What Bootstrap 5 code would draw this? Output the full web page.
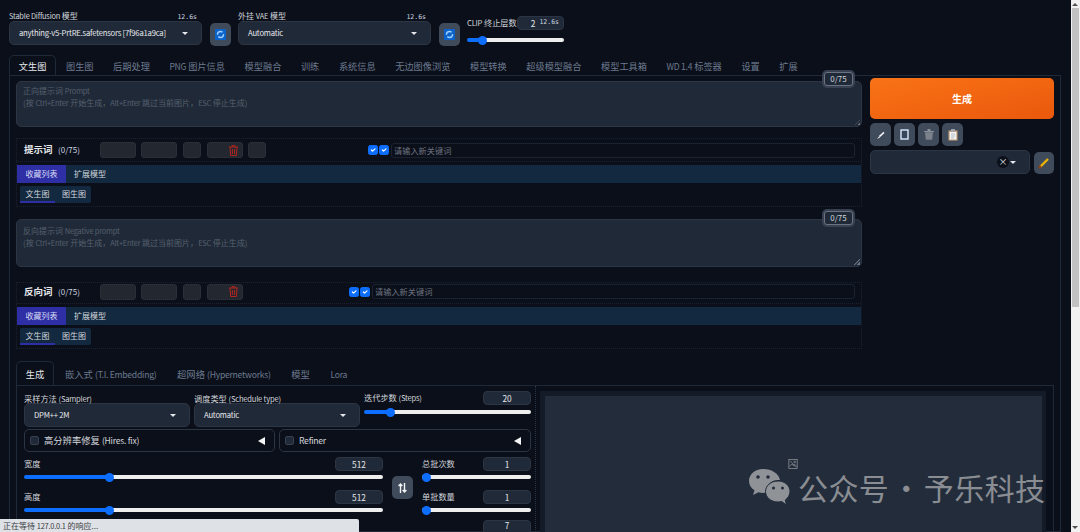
<!DOCTYPE html>
<html lang="zh">
<head>
  <meta charset="UTF-8">
  <title>Stable Diffusion WebUI</title>
  <link href="https://cdn.jsdelivr.net/npm/bootstrap@5.3.0/dist/css/bootstrap.min.css" rel="stylesheet">
  <style>
    html, body { height: 532px; overflow: hidden; }
    body { background: #0b0f19; color: #d1d5db; font: 9.5px/1.2 "Noto Sans CJK SC", "Noto Sans", sans-serif; }
    .lat { font-size: .93em; letter-spacing: -.03em; }
    .app { height: 532px; overflow: hidden; }
    .main-area { width: 1071px; height: 532px; padding-left: 9px; overflow: hidden; flex: none; }
    .fake-scroll { width: 9px; background: #f1f1f1; flex: none; display: flex; flex-direction: column; align-items: flex-end; }
    .fake-scroll i { display: block; width: 7px; height: 299px; background: #c1c1c1; margin: 2px 1px 0 0; }
    .fake-scroll b { width: 0; height: 0; border: 3px solid transparent; border-bottom-color: #505050; border-top: 0; margin: 3px 2px 0 0; }
    .fake-scroll u { width: 0; height: 0; border: 3px solid transparent; border-top-color: #505050; border-bottom: 0; margin: auto 2px 3px 0; }

    .top-row { height: 55px; }
    .pick { width: 193px; padding-top: 10px; flex: none; }
    .pick-head { height: 11px; font-size: 8px; line-height: 11px; }
    .timer { font: 6.5px/11px "DejaVu Sans Mono", monospace; margin-top: 2px; padding-right: 5px; color: #cbd5e1; }
    .drop { height: 24px; background: #1f2937; border: 1px solid #2b3544; border-radius: 5px; padding: 0 13px 0 9px; font-size: 8.3px; color: #e5e7eb; white-space: nowrap; }
    .caret-mark { width: 0; height: 0; border: 3px solid transparent; border-top-color: #e5e7eb; border-bottom: 0; flex: none; }
    .refresh-btn { width: 21px; height: 23px; margin: 23px 7px 0 8px; flex: none; background: #3f4a5a; border-radius: 5px; }
    .clip-box { width: 97px; padding-top: 16px; flex: none; }
    .clip-box .field-num { width: 47px; margin: 0; padding-right: 4px; gap: 4px; }

    .field-num { height: 14px; width: 48px; background: #1f2937; border: 1px solid #2b3544; border-radius: 4px; font-size: 8.3px; line-height: 12px; text-align: center; color: #e5e7eb; flex: none; }
    .num-last { line-height: 9px; }
    .slide { display: block; width: 100%; height: 12px; margin: 0; padding: 0; appearance: none; -webkit-appearance: none; background: transparent; }
    .slide::-webkit-slider-runnable-track { height: 4px; border-radius: 2px; background: linear-gradient(to right, #0d6efd var(--v), #eeeeee var(--v)); }
    .slide::-webkit-slider-thumb { -webkit-appearance: none; width: 9px; height: 9px; margin-top: -2.5px; border-radius: 50%; background: #0d6efd; border: 0; }

    .nav-tabs.sd-tabs { border-bottom: 1px solid #1f2937; --bs-nav-tabs-border-width: 0; }
    .sd-tabs .nav-link { padding: 0 8.8px; height: 20px; line-height: 21px; font-size: 9.2px; color: #6b7a90; background: none; border: 1px solid transparent; border-bottom: 0; margin: 0; border-radius: 5px 5px 0 0; white-space: nowrap; }
    .sd-tabs .nav-link.active { color: #e5e7eb; background: #0b0f19; border-color: #1f2937; }
    .sd-tabs.lower .nav-link { height: 24px; line-height: 25px; font-size: 9.3px; padding: 0 8.8px; margin-right: 1px; }

    .tab-body { width: 1052px; height: 456px; padding: 5px 6px 0; border: solid #1f2937; border-width: 0 1px 1px; }
    .left-col { width: 846px; flex: none; }
    .right-col { width: 184px; margin-left: 8px; flex: none; }

    .prompt-box { position: relative; height: 46px; background: #1f2937; border: 1px solid #2b3544; border-radius: 5px; padding: 3px 6px; color: #56606f; font-size: 8px; line-height: 11.5px; }
    .prompt-box.neg { height: 48px; margin-top: 12px; padding-top: 5px; }
    .prompt-box::after { content: ""; position: absolute; right: 1px; bottom: 1px; width: 6px; height: 6px; background: linear-gradient(135deg, transparent 50%, #6b7280 50%, transparent 65%, transparent 75%, #6b7280 75%); }
    .count-badge { position: absolute; top: -10px; right: 8px; width: 29px; height: 14px; background: #1f2937; border: 1px solid #6b7280; box-shadow: 0 0 0 2px #374151; border-radius: 3px; color: #d1d5db; font-size: 8px; line-height: 12px; text-align: center; }
    .neg .count-badge { top: -9px; }

    .tag-box { height: 69px; margin-top: 11px; border: 1px dotted #1a2230; }
    .tag-box.neg { height: 67px; margin-top: 15px; }
    .tag-head { height: 23px; padding: 3px 6px 3px 7px; border-bottom: 1px dotted #1a2230; }
    .tag-box.neg .tag-head { height: 21px; padding: 0 6px 3px 7px; }
    .tag-title { width: 34px; font-size: 9.5px; font-weight: 700; color: #e5e7eb; flex: none; }
    .tag-count { width: 42px; font-size: 8px; color: #cbd5e1; flex: none; }
    .gray-block { height: 16px; background: #23272f; border: 1px solid #2a2e37; border-radius: 3px; margin-right: 5px; flex: none; }
    .w36 { width: 36px; }
    .w18 { width: 18px; }
    .gap6 { margin-right: 6px; }
    .tag-check { width: 10px; height: 10px; margin: 0 1px 0 0; border-radius: 2px; flex: none; }
    .tag-input { height: 15px; flex-grow: 1; margin-left: 1px; border: 1px solid #1a2230; border-radius: 3px; padding: 0 2px; color: #6b7280; font-size: 8.2px; line-height: 13px; }
    .fav-bar { height: 18px; background: #13293f; margin-top: 3px; font-size: 8px; line-height: 18px; color: #d1d5db; }
    .fav-on { width: 49px; background: #2f2fa5; text-align: center; color: #d8dcf5; margin-right: 8px; flex: none; }
    .sub-tabs { width: 71px; height: 17px; margin: 3px 0 0 3px; background: #13293f; border-radius: 2px; font-size: 8px; line-height: 15px; color: #d1d5db; }
    .sub-tabs span { padding: 0 5px 0 7px; flex: none; }
    .sub-tabs .on { width: 35px; border-bottom: 2px solid #2f2fa5; text-align: center; height: 17px; padding: 0; }

    .gen-btn { height: 41px; margin-top: -3px; border: 0; border-radius: 5px; width: 100%; background: linear-gradient(to bottom right, #f97316, #ea580c); color: #fff; font-size: 10px; font-weight: 700; }
    .tool-btn { width: 21px; height: 23px; padding: 0; background: #3f4a5a; border: 0; border-radius: 5px; flex: none; }
    .pencil-btn { width: 20px; height: 22px; margin-top: 2px; }
    .style-pick { width: 160px; height: 24px; background: #1f2937; border: 1px solid #2b3544; border-radius: 5px; padding-right: 13px; flex: none; }
    .clear-x { width: 12px; height: 12px; border-radius: 50%; background: #0b0f19; color: #e5e7eb; font-size: 9px; line-height: 12px; text-align: center; margin-right: 1px; }

    .lower-wrap { margin-top: 12px; width: 1038px; }
    .lower-body { height: 160px; padding-left: 7px; border-left: 1px solid #1f2937; border-right: 1px solid #1f2937; }
    .gen-left { width: 507px; padding-top: 5px; flex: none; }
    .gen-right { position: relative; width: 506px; margin-left: 4px; padding: 5px 4px 0 5px; background: #131b28; margin-top: 5px; flex: none; }
    .gen-divider { width: 1px; margin-left: 4px; border-left: 1px dotted #2b3544; flex: none; }
    .gen-preview { height: 150px; background: #222c3b; }

    .sel-col { width: 166px; padding-top: 2px; flex: none; }
    .sel-col label { display: block; height: 10px; font-size: 8.2px; line-height: 10px; margin-bottom: 0; }
    .slider-head { height: 14px; font-size: 8.2px; }
    .fold-box { height: 23px; margin-top: 2px; border: 1px solid #2b3544; border-radius: 5px; padding: 0 9px 0 5px; font-size: 9.3px; color: #d1d5db; }
    .fold-box .form-check-input { width: 9px; height: 9px; margin: 0 5px 0 0; background-color: #1f2937; border-color: #374151; border-radius: 2px; }
    .fold-arrow { width: 0; height: 0; border: 4px solid transparent; border-right: 7px solid #f3f4f6; border-left: 0; margin-left: auto; }
    .dim-col { width: 359px; padding-top: 5px; flex: none; }
    .swap-col { width: 39px; padding-top: 24px; flex: none; }
    .batch-col { width: 109px; padding-top: 5px; flex: none; }
    .stack-gap { margin-top: 7px; }
    .swap-btn { display: block; margin: 0 auto; width: 21px; height: 23px; padding: 0; border: 0; background: #3f4a5a; border-radius: 5px; }

    .img-broken { position: absolute; left: 248px; top: 68px; }
    .mark-row { position: absolute; left: 208px; top: 76px; gap: 7px; }
    .mark-text { font: 30px/40px "Noto Sans CJK SC", sans-serif; color: #8a8d92; letter-spacing: .4px; word-spacing: -5px; white-space: nowrap; }
    .status-strip { position: absolute; left: 0; bottom: 0; width: 359px; height: 13px; background: #dee1e6; border-radius: 0 2px 0 0; color: #3c4043; font-size: 8px; line-height: 13px; padding-left: 3px; }
  </style>
</head>
<body>
<div class="app d-flex">
  <div class="main-area">

    <!-- top model pickers -->
    <div class="top-row d-flex">
      <div class="pick">
        <div class="pick-head d-flex justify-content-between"><span><span class="lat">Stable Diffusion</span> 模型</span><span class="timer">12.6s</span></div>
        <div class="drop d-flex align-items-center justify-content-between"><span class="lat">anything-v5-PrtRE.safetensors [7f96a1a9ca]</span><span class="caret-mark"></span></div>
      </div>
      <div class="refresh-btn d-flex align-items-center justify-content-center">
        <svg width="11" height="11" viewBox="0 0 11 11"><rect width="11" height="11" fill="#0b63c9"/><circle cx="5.5" cy="5.5" r="3" fill="none" stroke="#9fd0ff" stroke-width="1.4" stroke-dasharray="7 2"/></svg>
      </div>
      <div class="pick">
        <div class="pick-head d-flex justify-content-between"><span>外挂 <span class="lat">VAE</span> 模型</span><span class="timer">12.6s</span></div>
        <div class="drop d-flex align-items-center justify-content-between"><span class="lat">Automatic</span><span class="caret-mark"></span></div>
      </div>
      <div class="refresh-btn d-flex align-items-center justify-content-center">
        <svg width="11" height="11" viewBox="0 0 11 11"><rect width="11" height="11" fill="#0b63c9"/><circle cx="5.5" cy="5.5" r="3" fill="none" stroke="#9fd0ff" stroke-width="1.4" stroke-dasharray="7 2"/></svg>
      </div>
      <div class="clip-box">
        <div class="slider-head d-flex justify-content-between align-items-center"><span class="text-nowrap"><span class="lat">CLIP</span> 终止层数</span>
          <span class="field-num d-flex justify-content-end"><span>2</span><span class="timer m-0 p-0">12.6s</span></span></div>
        <input class="slide mt-1" type="range" style="--v:12%" value="12" aria-label="clip">
      </div>
    </div>

    <!-- main tabs -->
    <ul class="nav nav-tabs sd-tabs flex-nowrap" style="width:1052px">
      <li class="nav-item"><a class="nav-link active" href="#">文生图</a></li>
      <li class="nav-item"><a class="nav-link" href="#">图生图</a></li>
      <li class="nav-item"><a class="nav-link" href="#">后期处理</a></li>
      <li class="nav-item"><a class="nav-link" href="#"><span class="lat">PNG</span> 图片信息</a></li>
      <li class="nav-item"><a class="nav-link" href="#">模型融合</a></li>
      <li class="nav-item"><a class="nav-link" href="#">训练</a></li>
      <li class="nav-item"><a class="nav-link" href="#">系统信息</a></li>
      <li class="nav-item"><a class="nav-link" href="#">无边图像浏览</a></li>
      <li class="nav-item"><a class="nav-link" href="#">模型转换</a></li>
      <li class="nav-item"><a class="nav-link" href="#">超级模型融合</a></li>
      <li class="nav-item"><a class="nav-link" href="#">模型工具箱</a></li>
      <li class="nav-item"><a class="nav-link" href="#"><span class="lat">WD 1.4</span> 标签器</a></li>
      <li class="nav-item"><a class="nav-link" href="#">设置</a></li>
      <li class="nav-item"><a class="nav-link" href="#">扩展</a></li>
    </ul>

    <div class="tab-body">
      <div class="d-flex">
        <div class="left-col">
          <div class="prompt-box">
            正向提示词 <span class="lat">Prompt</span><br>(按 <span class="lat">Ctrl+Enter</span> 开始生成，<span class="lat">Alt+Enter</span> 跳过当前图片，<span class="lat">ESC</span> 停止生成)
            <span class="count-badge">0/75</span>
          </div>

          <div class="tag-box">
            <div class="tag-head d-flex align-items-center">
              <span class="tag-title">提示词</span><span class="tag-count">(0/75)</span>
              <span class="gray-block w36"></span><span class="gray-block w36 gap6"></span><span class="gray-block w18 gap6"></span>
              <span class="gray-block w36 d-flex align-items-center justify-content-end pe-1">
                <svg width="9" height="11" viewBox="0 0 9 11" fill="none" stroke="#b3261e" stroke-width="1"><path d="M0 2h9M3 2V.7h3V2M1 2l.6 8.5h5.8L8 2M3.4 4v5M5.6 4v5"/></svg>
              </span>
              <span class="gray-block w18"></span>
              <span class="d-flex align-items-center flex-grow-1" style="margin-left:97px">
                <input class="form-check-input tag-check" type="checkbox" checked aria-label="a"><input class="form-check-input tag-check" type="checkbox" checked aria-label="b">
                <span class="tag-input">请输入新关键词</span>
              </span>
            </div>
            <div class="fav-bar d-flex"><span class="fav-on">收藏列表</span><span>扩展模型</span></div>
            <div class="sub-tabs d-flex"><span class="on">文生图</span><span>图生图</span></div>
          </div>

          <div class="prompt-box neg">
            反向提示词 <span class="lat">Negative prompt</span><br>(按 <span class="lat">Ctrl+Enter</span> 开始生成，<span class="lat">Alt+Enter</span> 跳过当前图片，<span class="lat">ESC</span> 停止生成)
            <span class="count-badge">0/75</span>
          </div>

          <div class="tag-box neg">
            <div class="tag-head d-flex align-items-center">
              <span class="tag-title">反向词</span><span class="tag-count">(0/75)</span>
              <span class="gray-block w36"></span><span class="gray-block w36 gap6"></span><span class="gray-block w18 gap6"></span>
              <span class="gray-block w36 d-flex align-items-center justify-content-end pe-1">
                <svg width="9" height="11" viewBox="0 0 9 11" fill="none" stroke="#b3261e" stroke-width="1"><path d="M0 2h9M3 2V.7h3V2M1 2l.6 8.5h5.8L8 2M3.4 4v5M5.6 4v5"/></svg>
              </span>
              <span class="d-flex align-items-center flex-grow-1" style="margin-left:101px">
                <input class="form-check-input tag-check" type="checkbox" checked aria-label="c"><input class="form-check-input tag-check" type="checkbox" checked aria-label="d">
                <span class="tag-input">请输入新关键词</span>
              </span>
            </div>
            <div class="fav-bar d-flex"><span class="fav-on">收藏列表</span><span>扩展模型</span></div>
            <div class="sub-tabs d-flex"><span class="on">文生图</span><span>图生图</span></div>
          </div>
        </div>

        <div class="right-col">
          <button class="gen-btn" type="button">生成</button>
          <div class="d-flex mt-1" style="gap:3px">
            <button class="tool-btn" type="button" aria-label="read"><svg width="9" height="9" viewBox="0 0 9 9"><path d="M1 8 L3 5.6 L4 6.6 Z" fill="#f3f4f6"/><path d="M3.4 5.6 L8 1.4" stroke="#f3f4f6" stroke-width="1.5"/></svg></button>
            <button class="tool-btn" type="button" aria-label="copy"><svg width="9" height="11" viewBox="0 0 9 11"><rect x="1" y="1" width="7" height="9" fill="#39475a" stroke="#dbeafe" stroke-width="1.4"/></svg></button>
            <button class="tool-btn" type="button" aria-label="trash"><svg width="10" height="11" viewBox="0 0 10 11"><path d="M0 2h10v1H0zM3.5 0h3v2h-3z" fill="#8a9099"/><path d="M1 3.2h8l-.8 7.600H1.800z" fill="#7b828c"/></svg></button>
            <button class="tool-btn" type="button" aria-label="paste"><svg width="10" height="12" viewBox="0 0 10 12"><rect x=".5" y="1.500" width="9" height="10" fill="#c9a57c"/><rect x="1.700" y="3" width="6.600" height="7.500" fill="#f3f4f6"/><rect x="3" y="0" width="4" height="2.600" fill="#9ca3af"/><path d="M3 5h4M3 7h4M3 9h3" stroke="#9ca3af" stroke-width=".7"/></svg></button>
          </div>
          <div class="d-flex mt-1" style="gap:4px">
            <div class="style-pick d-flex align-items-center justify-content-end"><span class="clear-x">×</span><span class="caret-mark"></span></div>
            <button class="tool-btn pencil-btn" type="button" aria-label="edit"><svg width="12" height="12" viewBox="0 0 12 12"><path d="M2 10 L10 2" stroke="#eab308" stroke-width="2.400"/><path d="M1 11 L3 9.200" stroke="#92400e" stroke-width="2.400"/></svg></button>
          </div>
        </div>
      </div>

      <!-- lower settings -->
      <div class="lower-wrap">
        <ul class="nav nav-tabs sd-tabs lower flex-nowrap">
          <li class="nav-item"><a class="nav-link active" href="#">生成</a></li>
          <li class="nav-item"><a class="nav-link" href="#">嵌入式 <span class="lat">(T.I. Embedding)</span></a></li>
          <li class="nav-item"><a class="nav-link" href="#">超网络 <span class="lat">(Hypernetworks)</span></a></li>
          <li class="nav-item"><a class="nav-link" href="#">模型</a></li>
          <li class="nav-item"><a class="nav-link" href="#"><span class="lat">Lora</span></a></li>
        </ul>
        <div class="lower-body d-flex">
          <div class="gen-left">
            <div class="d-flex" style="gap:4px">
              <div class="sel-col"><label>采样方法 <span class="lat">(Sampler)</span></label><div class="drop d-flex align-items-center justify-content-between"><span class="lat">DPM++ 2M</span><span class="caret-mark"></span></div></div>
              <div class="sel-col"><label>调度类型 <span class="lat">(Schedule type)</span></label><div class="drop d-flex align-items-center justify-content-between"><span class="lat">Automatic</span><span class="caret-mark"></span></div></div>
              <div style="width:167px">
                <div class="slider-head d-flex justify-content-between align-items-center"><span>迭代步数 <span class="lat">(Steps)</span></span><span class="field-num">20</span></div>
                <input class="slide" type="range" style="--v:14%;margin-top:1px" value="14" aria-label="steps">
              </div>
            </div>
            <div class="d-flex" style="gap:4px">
              <div class="fold-box d-flex align-items-center" style="width:251px"><input class="form-check-input" type="checkbox" aria-label="hires"><span>高分辨率修复 <span class="lat">(Hires. fix)</span></span><span class="fold-arrow"></span></div>
              <div class="fold-box d-flex align-items-center" style="width:252px"><input class="form-check-input" type="checkbox" aria-label="refiner"><span class="lat">Refiner</span><span class="fold-arrow"></span></div>
            </div>
            <div class="d-flex">
              <div class="dim-col">
                <div class="slider-head d-flex justify-content-between align-items-center"><span>宽度</span><span class="field-num">512</span></div>
                <input class="slide" type="range" style="--v:23%" value="23" aria-label="width">
                <div class="slider-head d-flex justify-content-between align-items-center stack-gap"><span>高度</span><span class="field-num">512</span></div>
                <input class="slide" type="range" style="--v:23%" value="23" aria-label="height">
              </div>
              <div class="swap-col">
                <button class="swap-btn" type="button" aria-label="swap"><svg width="9" height="10" viewBox="0 0 9 10" fill="none" stroke="#f3f4f6" stroke-width="1.400"><path d="M2.500 10V1M.6 3 2.500 1l1.900 2M6.500 0v9M4.600 7l1.900 2 1.900-2"/></svg></button>
              </div>
              <div class="batch-col">
                <div class="slider-head d-flex justify-content-between align-items-center"><span>总批次数</span><span class="field-num">1</span></div>
                <input class="slide" type="range" style="--v:0%" value="0" aria-label="batch count">
                <div class="slider-head d-flex justify-content-between align-items-center stack-gap"><span>单批数量</span><span class="field-num">1</span></div>
                <input class="slide" type="range" style="--v:0%" value="0" aria-label="batch size">
                <div class="d-flex justify-content-end" style="margin-top:4px"><span class="field-num num-last">7</span></div>
              </div>
            </div>
          </div>
          <div class="gen-divider"></div>
          <div class="gen-right">
            <div class="gen-preview"></div>
            <svg class="img-broken" width="10" height="10" viewBox="0 0 11 12" fill="none" stroke="#8f9297" stroke-width=".9"><rect x=".5" y=".5" width="10" height="11"/><path d="M1 9l3-3 2 2 1.500-1.500L10 9M2 2l7 8"/><circle cx="7.500" cy="3.500" r="1"/></svg>
            <div class="mark-row d-flex align-items-center">
              <svg width="43" height="38" viewBox="0 0 43 38" fill="#8f9297"><path d="M15 1C7 1 1 6.500 1 13c0 3.800 2 7 5.500 9.300L5 27l5.500-2.700c1.500.4 3 .6 4.500.6 1 0 2-.1 3-.3C17 17 24 11 32 12 31 5.800 24 1 15 1z"/><path d="M30 13c-7.200 0-12.500 4.800-12.500 10.500S22.800 34 30 34c1.300 0 2.500-.2 3.700-.5L38.500 37l-1.200-5C40 30 42 27 42 23.500 42 17.800 37 13 30 13z" stroke="#222c3b" stroke-width="1"/><circle cx="10" cy="9" r="1.800" fill="#222c3b"/><circle cx="20" cy="9" r="1.800" fill="#222c3b"/><circle cx="25.500" cy="20" r="1.500" fill="#222c3b"/><circle cx="34.500" cy="20" r="1.500" fill="#222c3b"/></svg>
              <span class="mark-text">公众号 · 予乐科技</span>
            </div>
          </div>
        </div>
      </div>
    </div>
  </div>
  <div class="fake-scroll"><b></b><i></i><u></u></div>
</div>
<div class="status-strip">正在等待 <span class="lat">127.0.0.1</span> 的响应...</div>
<script src="https://cdn.jsdelivr.net/npm/bootstrap@5.3.0/dist/js/bootstrap.bundle.min.js"></script>
</body>
</html>
